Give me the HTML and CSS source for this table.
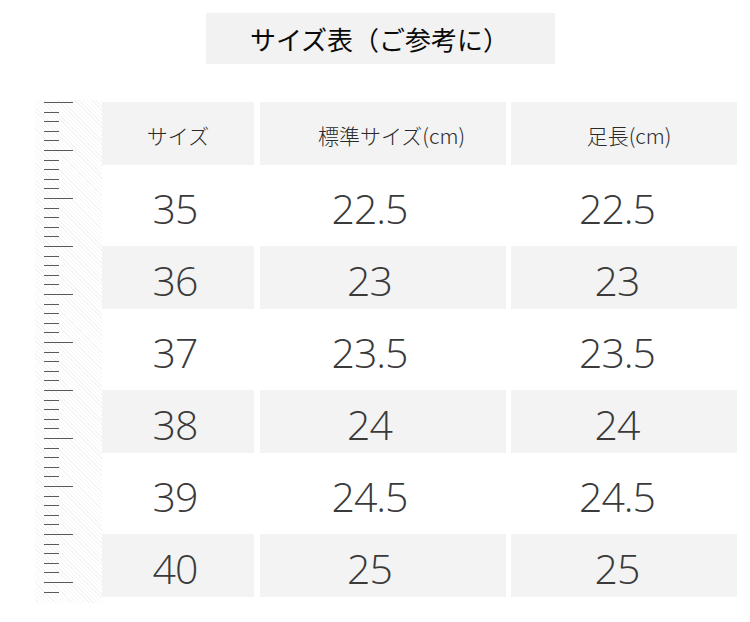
FILE: index.html
```html
<!DOCTYPE html>
<html lang="ja">
<head>
<meta charset="utf-8">
<title>サイズ表</title>
<link rel="stylesheet" href="styles.css">
</head>
<body>
<div class="title">サイズ表（ご参考に）</div>
<div class="chart">
  <div class="ruler"></div>
  <div class="table">
    <div class="cell head c1">サイズ</div>
    <div class="cell head c2">標準サイズ(cm)</div>
    <div class="cell head c3">足長(cm)</div>

    <div class="cell num c1">35</div>
    <div class="cell num c2">22.5</div>
    <div class="cell num c3">22.5</div>

    <div class="cell num shade c1">36</div>
    <div class="cell num shade c2">23</div>
    <div class="cell num shade c3">23</div>

    <div class="cell num c1">37</div>
    <div class="cell num c2">23.5</div>
    <div class="cell num c3">23.5</div>

    <div class="cell num shade c1">38</div>
    <div class="cell num shade c2">24</div>
    <div class="cell num shade c3">24</div>

    <div class="cell num c1">39</div>
    <div class="cell num c2">24.5</div>
    <div class="cell num c3">24.5</div>

    <div class="cell num shade c1">40</div>
    <div class="cell num shade c2">25</div>
    <div class="cell num shade c3">25</div>
  </div>
</div>
</body>
</html>
```

FILE: styles.css
```css
html, body {
  margin: 0;
  padding: 0;
  background: #ffffff;
}

body {
  width: 750px;
  height: 622px;
  overflow: hidden;
  font-family: "Noto Sans CJK JP", "Noto Sans", sans-serif;
}

.title {
  margin: 13px 0 0 206px;
  width: 349px;
  height: 51px;
  background: #f2f2f2;
  display: flex;
  align-items: center;
  justify-content: center;
  font-size: 26px;
  color: #0a0a0a;
  letter-spacing: 0;
  padding-right: 2px;
  box-sizing: border-box;
}

.chart {
  display: flex;
  align-items: flex-start;
  margin-top: 36px;
}

.ruler {
  margin-left: 35px;
  width: 67px;
  height: 503px;
  position: relative;
  background: repeating-linear-gradient(45deg, #ffffff 0 2px, #f5f5f5 2px 3px);
}

.ruler::before,
.ruler::after {
  content: "";
  position: absolute;
  left: 9px;
  top: 2px;
  bottom: 2px;
}

.ruler::before {
  width: 15px;
  background: repeating-linear-gradient(to bottom, #5a5a5a 0 1px, transparent 1px 9.6px);
}

.ruler::after {
  width: 29px;
  background: repeating-linear-gradient(to bottom, #5a5a5a 0 1px, transparent 1px 48px);
}

.table {
  margin-top: 2px;
  display: grid;
  grid-template-columns: 152px 246px 226px;
  grid-auto-rows: 63px;
  column-gap: 5.5px;
  row-gap: 9px;
}

.cell {
  display: flex;
  align-items: center;
  justify-content: center;
  box-sizing: border-box;
}

.head {
  background: #f3f3f3;
  font-size: 21px;
  font-weight: 300;
  color: #2a2a2a;
  padding-top: 2px;
}

.head.c2 { padding-left: 18px; }
.head.c3 { padding-left: 10px; }

.shade {
  background: #f3f3f3;
}

.num {
  font-family: "Open Sans", "Noto Sans", sans-serif;
  font-weight: 300;
  font-size: 41px;
  color: #3a3a3a;
  letter-spacing: -1px;
  padding-top: 4px;
}

.num.c1 { padding-right: 6px; }
.num.c2 { padding-right: 26px; }
.num.c3 { padding-right: 14px; }
```
